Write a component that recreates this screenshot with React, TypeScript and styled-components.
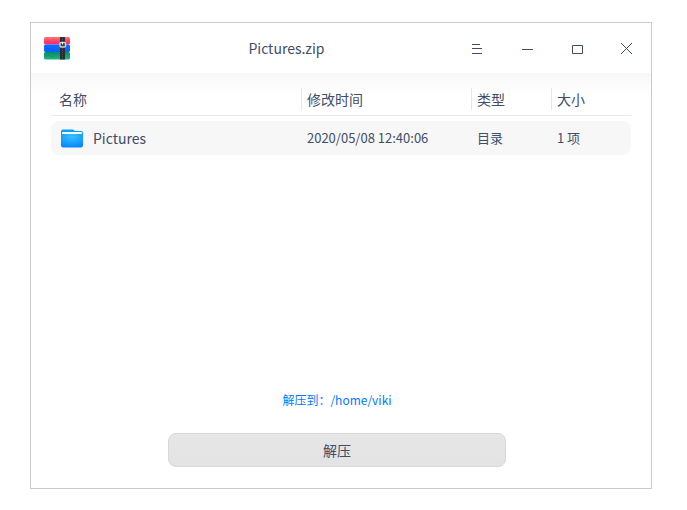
import React from "react";
import styled, { createGlobalStyle } from "styled-components";

const ink = "#414d68";

const GlobalStyle = createGlobalStyle`
  * { box-sizing: border-box; }
  body {
    margin: 0;
    background: #ffffff;
    color: ${ink};
    font-family: "Noto Sans CJK SC", "Noto Sans", sans-serif;
    font-size: 14px;
    line-height: 20px;
  }
`;

const Desktop = styled.div`
  display: flex;
  min-height: 100vh;
  padding: 22px 35px 21px 30px;
`;

const Window = styled.main`
  display: flex;
  flex: 1;
  flex-direction: column;
  min-width: 0;
  border: 1px solid #cacaca;
  background: #ffffff;
`;

const TitleBar = styled.header`
  display: grid;
  grid-template-columns: 91px 1fr 200px;
  align-items: center;
  height: 50px;
`;

const LogoSlot = styled.div`
  display: flex;
  padding-left: 12px;
`;

const Title = styled.h1`
  margin: 0;
  font-size: 14px;
  font-weight: 400;
  text-align: center;
`;

const Controls = styled.div`
  display: flex;
`;

const WindowButton = styled.button`
  display: flex;
  align-items: center;
  justify-content: center;
  width: 50px;
  height: 50px;
  padding: 0;
  border: 0;
  background: transparent;
  color: ${ink};
`;

const Content = styled.section`
  flex: 1;
  padding: 10px 20px;
  background: linear-gradient(#f7f7f7, #ffffff 22px);
`;

const FileTable = styled.table`
  width: 100%;
  table-layout: fixed;
  border-collapse: separate;
  border-spacing: 0;
  text-align: left;
`;

const FileBody = styled.tbody`
  &::before {
    display: block;
    height: 5px;
    content: "";
  }
`;

const Column = styled.col<{ $share: number }>`
  width: ${({ $share }) => $share}%;
`;

const HeadCell = styled.th`
  height: 33px;
  padding: 5px 0;
  border-bottom: 1px solid #e9e9e9;
  font-weight: 400;
`;

const HeadLabel = styled.div<{ $first?: boolean }>`
  padding-left: ${({ $first }) => ($first ? "8px" : "5px")};
  border-left: ${({ $first }) => ($first ? "0" : "1px solid #e6e6e6")};
  line-height: 22px;
`;

const Cell = styled.td`
  height: 34px;
  padding: 0 0 0 6px;
  background: #f7f7f7;
  font-size: 13px;

  &:first-child {
    padding-left: 10px;
    border-radius: 8px 0 0 8px;
    font-size: 14px;
  }

  &:last-child {
    border-radius: 0 8px 8px 0;
  }
`;

const FileName = styled.div`
  display: flex;
  align-items: center;
  gap: 10px;
`;

const Footer = styled.footer`
  display: flex;
  flex-direction: column;
  align-items: center;
  gap: 23px;
  padding: 0 8px 21px 0;
`;

const PathLink = styled.a`
  color: #007aff;
  font-size: 12px;
  text-decoration: none;
`;

const ExtractButton = styled.button`
  width: 338px;
  max-width: 100%;
  height: 34px;
  padding: 0;
  border: 1px solid #d8d8d8;
  border-radius: 8px;
  background: linear-gradient(#e6e6e6, #e3e3e3);
  color: ${ink};
  font-family: inherit;
  font-size: 14px;
`;

const ArchiveLogo = () => (
  <svg width="28" height="26" viewBox="0 0 28 26" aria-hidden="true">
    <defs>
      <linearGradient id="red" x1="0" y1="0" x2="0" y2="1">
        <stop offset="0" stopColor="#ff7a5c" />
        <stop offset="0.5" stopColor="#fd4570" />
        <stop offset="1" stopColor="#fb2a6c" />
      </linearGradient>
      <linearGradient id="blue" x1="0" y1="0" x2="0" y2="1">
        <stop offset="0" stopColor="#0a6cff" />
        <stop offset="1" stopColor="#0a62fa" />
      </linearGradient>
      <linearGradient id="green" x1="0" y1="0" x2="0" y2="1">
        <stop offset="0" stopColor="#0b8a68" />
        <stop offset="1" stopColor="#1fb57c" />
      </linearGradient>
    </defs>
    <rect x="1" y="2" width="26" height="7.5" rx="1.5" fill="url(#red)" />
    <rect x="1" y="9.5" width="26" height="7.5" rx="1.5" fill="url(#blue)" />
    <rect x="1" y="17" width="26" height="7.5" rx="1.5" fill="url(#green)" />
    <path d="M3.5 6.5h3M3.5 13.5h3M8 14.5h3M3.5 20.5h3M8 21.5h3" stroke="#102e75" strokeOpacity="0.15" />
    <rect x="17" y="2" width="5" height="22.5" fill="#292c33" />
    <path d="M19.5 2v5M19.5 13v11" stroke="#4a4e56" strokeDasharray="1 1" />
    <rect x="17" y="7.5" width="5.5" height="4.5" rx="1" fill="#3b3d43" stroke="#d3d1d0" strokeWidth="1.4" />
    <path d="M19.5 7v2.5" stroke="#f0eeee" />
  </svg>
);

const FolderIcon = () => (
  <svg width="22" height="19" viewBox="0 0 22 19" aria-hidden="true">
    <defs>
      <radialGradient id="folder" cx="0.5" cy="0.2" r="0.75">
        <stop offset="0" stopColor="#38c3ff" />
        <stop offset="1" stopColor="#078bfb" />
      </radialGradient>
    </defs>
    <path d="M2 0.5h10l2 1.5h6q2 0 2 2v7H0V2.5q0-2 2-2z" fill="#08a0f5" />
    <rect x="1" y="3" width="20" height="6" rx="1" fill="#f3fcff" />
    <path d="M0 5h22v11.5q0 2-2 2H2q-2 0-2-2z" fill="url(#folder)" />
  </svg>
);

const controls = [
  { label: "菜单", path: "M3 3.5h8M3 7.5h10M3 12.5h10" },
  { label: "最小化", path: "M3 8.5h11" },
  { label: "最大化", path: "M3.5 4.5h10v8h-10z" },
  { label: "关闭", path: "M2 2l11 11M13 2l-11 11" },
];

const columns = [
  { label: "名称", share: 43.1 },
  { label: "修改时间", share: 29.3 },
  { label: "类型", share: 13.8 },
  { label: "大小", share: 13.8 },
];

export default function App() {
  return (
    <Desktop>
      <GlobalStyle />
      <Window>
        <TitleBar>
          <LogoSlot><ArchiveLogo /></LogoSlot>
          <Title>Pictures.zip</Title>
          <Controls>
            {controls.map(({ label, path }) => (
              <WindowButton key={label} type="button" aria-label={label}>
                <svg width="14" height="14" viewBox="0 0 14 14" fill="none" stroke="currentColor" aria-hidden="true">
                  <path d={path} />
                </svg>
              </WindowButton>
            ))}
          </Controls>
        </TitleBar>
        <Content>
          <FileTable>
            <colgroup>
              {columns.map(({ label, share }) => <Column key={label} $share={share} />)}
            </colgroup>
            <thead>
              <tr>
                {columns.map(({ label }, index) => (
                  <HeadCell key={label} scope="col">
                    <HeadLabel $first={index === 0}>{label}</HeadLabel>
                  </HeadCell>
                ))}
              </tr>
            </thead>
            <FileBody>
              <tr>
                <Cell><FileName><FolderIcon />Pictures</FileName></Cell>
                <Cell>2020/05/08 12:40:06</Cell>
                <Cell>目录</Cell>
                <Cell>1 项</Cell>
              </tr>
            </FileBody>
          </FileTable>
        </Content>
        <Footer>
          <PathLink href="#destination">解压到：/home/viki</PathLink>
          <ExtractButton type="button">解压</ExtractButton>
        </Footer>
      </Window>
    </Desktop>
  );
}
